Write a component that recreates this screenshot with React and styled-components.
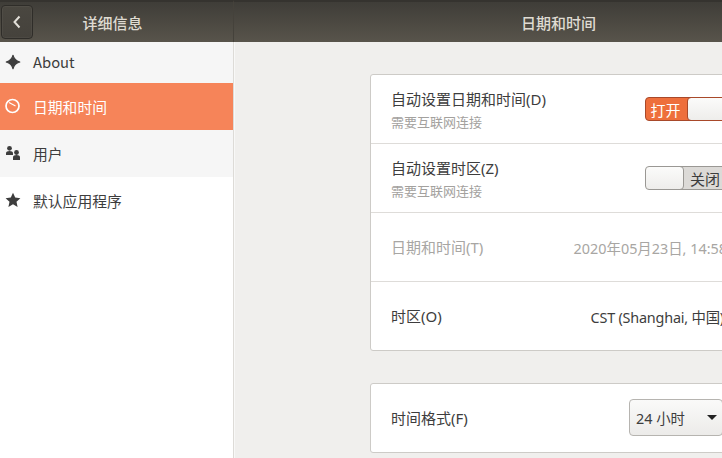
import React from "react";
import styled, { createGlobalStyle } from "styled-components";

const Global = createGlobalStyle`
  html, body { margin: 0; padding: 0; height: 100%; overflow: hidden; background: #f0efed; }
  #root { width: 722px; height: 458px; overflow: hidden; }
  * { box-sizing: border-box; }
`;

const Window = styled.div`
  width: 883px;
  height: 458px;
  display: grid;
  grid-template-columns: 234px 1fr;
  grid-template-rows: 42px 1fr;
  font-family: "Open Sans", "Noto Sans CJK SC", sans-serif;
  font-size: 14.5px;
  color: #3d3d3d;
`;

const HeaderPane = styled.header`
  display: flex;
  align-items: center;
  justify-content: center;
  position: relative;
  padding-right: ${(p) => (p.$left ? 8 : 0)}px;
  background: linear-gradient(#3f3d38, #58544b);
  border-top: 2px solid #35332f;
  border-right: ${(p) => (p.$left ? "1px solid #45423b" : "none")};
  color: #dfdbd2;
  font-family: "Noto Sans CJK SC", sans-serif;
  font-size: 15px;
  font-weight: 500;
`;

const BackButton = styled.button`
  position: absolute;
  left: 1px;
  top: 3px;
  width: 32px;
  height: 34px;
  padding: 0;
  display: flex;
  align-items: center;
  justify-content: center;
  background: linear-gradient(#4a4740, #45423c);
  border: 1px solid #2f2d29;
  border-radius: 4px;
  box-shadow: inset 0 0 0 1px rgba(255, 255, 255, 0.04);
`;

const Sidebar = styled.nav`
  background: #fff;
  border-right: 1px solid #dddbd7;
  display: flex;
  flex-direction: column;
`;

const NavItem = styled.div`
  display: flex;
  align-items: center;
  height: ${(p) => p.$h || 47}px;
  padding-left: 5px;
  gap: 12px;
  background: ${(p) => (p.$active ? "#f68459" : p.$plain ? "#fff" : "#f6f6f6")};
  color: ${(p) => (p.$active ? "#fff" : "#3d3d3d")};
`;

const NavLabel = styled.span`
  font-family: "Noto Sans CJK SC", sans-serif;
  font-size: 14.8px;
  margin-top: ${(p) => p.$dy || 0}px;
`;

const Main = styled.main`
  background: #f0efed;
  border-left: 1px solid #f8f8f7;
  padding: 32px 0 0 135px;
  display: flex;
  flex-direction: column;
  gap: 32px;
  overflow: hidden;
`;

const Card = styled.section`
  width: 377px;
  background: #fff;
  border: 1px solid #cdcbc7;
  border-radius: 3px;
  display: flex;
  flex-direction: column;
  flex: none;
`;

const Row = styled.div`
  height: ${(p) => p.$h || 69}px;
  padding: 0 19px 0 20px;
  display: flex;
  align-items: center;
  justify-content: space-between;
  border-top: ${(p) => (p.$first ? "none" : "1px solid #dedcd9")};
  flex: none;
`;

const Labels = styled.div`
  display: flex;
  flex-direction: column;
  gap: 4px;
  padding-top: 1px;
`;

const Label = styled.div`
  font-family: "Noto Sans", "Noto Sans CJK SC", sans-serif;
  font-size: 15px;
  line-height: 20px;
  color: ${(p) => (p.$muted ? "#a8a6a3" : "#3d3d3d")};
  white-space: nowrap;
`;

const Sub = styled.div`
  font-family: "Noto Sans CJK SC", sans-serif;
  font-size: 13px;
  line-height: 18px;
  color: #a3a19e;
`;

const Value = styled.div`
  font-family: "Noto Sans", "Noto Sans CJK SC", sans-serif;
  font-size: 14.4px;
  white-space: nowrap;
  letter-spacing: ${(p) => (p.$tight ? "-0.2px" : "normal")};
  margin-right: ${(p) => (p.$tight ? 3 : 0)}px;
  color: ${(p) => (p.$muted ? "#a8a6a3" : "#3d3d3d")};
`;

const Toggle = styled.div`
  width: 82px;
  height: 24px;
  border-radius: 4px;
  display: flex;
  flex-direction: ${(p) => (p.$on ? "row" : "row-reverse")};
  overflow: hidden;
  border: 1px solid ${(p) => (p.$on ? "#a8492a" : "#9a9894")};
  background: ${(p) => (p.$on ? "#ee6f3c" : "#dcdad7")};
`;

const ToggleText = styled.span`
  flex: 1;
  display: flex;
  align-items: center;
  justify-content: center;
  padding-right: ${(p) => (p.$on ? 2 : 0)}px;
  font-family: "Noto Sans CJK SC", sans-serif;
  font-size: 15px;
  color: ${(p) => (p.$on ? "#fff" : "#3d3d3d")};
`;

const Knob = styled.span`
  width: ${(p) => (p.$on ? 40 : 39)}px;
  margin: ${(p) => (p.$on ? "-1px -1px -1px 0" : "-1px 0 -1px -1px")};
  background: linear-gradient(#fbfbfa, #eeedeb);
  border: 1px solid ${(p) => (p.$on ? "#a8492a" : "#9a9894")};
  border-radius: 4px;
  flex: none;
`;

const Select = styled.div`
  width: 94px;
  height: 37px;
  margin: 0 4px 1px 0;
  padding: 0 5px 0 6px;
  display: flex;
  align-items: center;
  justify-content: space-between;
  border: 1px solid #b6b4b0;
  border-radius: 4px;
  background: linear-gradient(#fafaf9, #ecebe9);
  font-family: "Noto Sans", "Noto Sans CJK SC", sans-serif;
  font-size: 14.4px;
  color: #3d3d3d;
`;

const Caret = styled.span`
  width: 0;
  height: 0;
  border-left: 5px solid transparent;
  border-right: 5px solid transparent;
  border-top: 5px solid #222;
`;

const Icon = ({ children, color = "#3d3d3d", dy = 0 }) => (
  <svg width="16" height="16" viewBox="0 0 16 16" fill={color} style={{ flex: "none", marginTop: dy }}>
    {children}
  </svg>
);

export default function App() {
  return (
    <Window>
      <Global />
      <HeaderPane $left>
        <BackButton aria-label="back">
          <svg width="10" height="14" viewBox="0 0 10 14" fill="none">
            <path d="M7.5 1.5 2.500 7l5 5.500" stroke="#e2dfd8" strokeWidth="2" />
          </svg>
        </BackButton>
        详细信息
      </HeaderPane>
      <HeaderPane>日期和时间</HeaderPane>
      <Sidebar>
        <NavItem $h={41}>
          <Icon dy={-2}>
            <path d="M8 1.200c.8 3.500 2.800 5.700 6.800 6.800-4 1.100-6 3.300-6.800 6.800C7.200 11.300 5.200 9.100 1.200 8 5.200 6.900 7.200 4.700 8 1.200z" stroke="#3d3d3d" strokeWidth="1.100" strokeLinejoin="round" />
          </Icon>
          <NavLabel $dy={-2}>About</NavLabel>
        </NavItem>
        <NavItem $active>
          <Icon color="#fff" dy={-1}>
            <circle cx="7.500" cy="8" r="6.500" fill="none" stroke="#fff" strokeWidth="1.700" />
            <path d="M4 4.500 10.500 8" stroke="#fff" strokeWidth="1.200" fill="none" />
          </Icon>
          <NavLabel>日期和时间</NavLabel>
        </NavItem>
        <NavItem>
          <Icon dy={-1}>
            <circle cx="4.500" cy="3.300" r="2.400" />
            <path d="M1 10V8.300C1 6.800 2.500 6 4.500 6S8 6.800 8 8.300V10z" />
            <circle cx="11.500" cy="7.500" r="2.400" />
            <path d="M8 15v-2.700c0-1.500 1.500-2.200 3.500-2.200s3.500.7 3.500 2.200V15z" />
          </Icon>
          <NavLabel>用户</NavLabel>
        </NavItem>
        <NavItem $plain>
          <Icon dy={-1}>
            <path d="M8 .8l2.200 4.800 5.200.6-3.900 3.500 1.100 5.200L8 12.300l-4.600 2.600 1.100-5.200L.6 6.200l5.200-.6z" />
          </Icon>
          <NavLabel>默认应用程序</NavLabel>
        </NavItem>
      </Sidebar>
      <Main>
        <Card>
          <Row $first $h={68}>
            <Labels>
              <Label>自动设置日期和时间(D)</Label>
              <Sub>需要互联网连接</Sub>
            </Labels>
            <Toggle $on>
              <ToggleText $on>打开</ToggleText>
              <Knob $on />
            </Toggle>
          </Row>
          <Row>
            <Labels>
              <Label>自动设置时区(Z)</Label>
              <Sub>需要互联网连接</Sub>
            </Labels>
            <Toggle>
              <ToggleText>关闭</ToggleText>
              <Knob />
            </Toggle>
          </Row>
          <Row>
            <Label $muted>日期和时间(T)</Label>
            <Value $muted>2020年05月23日, 14:58</Value>
          </Row>
          <Row>
            <Label>时区(O)</Label>
            <Value $tight>CST (Shanghai, 中国)</Value>
          </Row>
        </Card>
        <Card>
          <Row $first $h={68}>
            <Label>时间格式(F)</Label>
            <Select>
              24 小时
              <Caret />
            </Select>
          </Row>
        </Card>
      </Main>
    </Window>
  );
}
